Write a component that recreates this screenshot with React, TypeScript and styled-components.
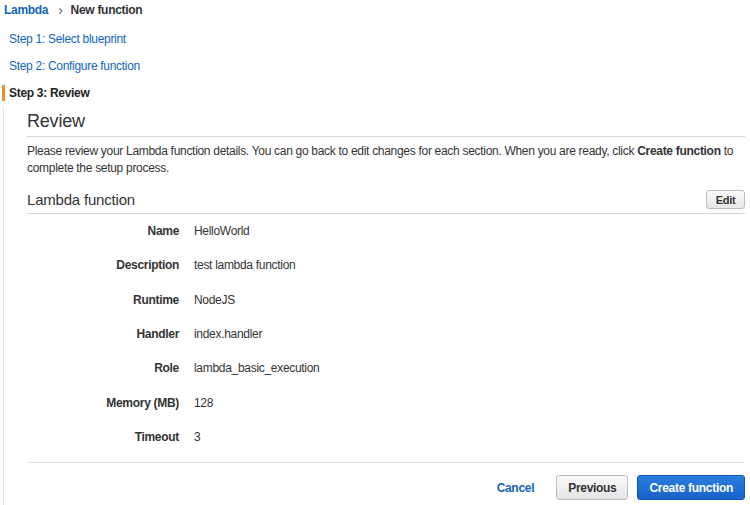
import React from "react";
import styled, { createGlobalStyle } from "styled-components";

const GlobalStyle = createGlobalStyle`
  html, body {
    margin: 0;
    padding: 0;
    background: #fff;
  }
  body {
    font-family: "Liberation Sans", Arial, sans-serif;
    font-size: 12px;
    letter-spacing: -0.3px;
    color: #333;
  }
  button {
    letter-spacing: -0.3px;
  }
`;

const Page = styled.div`
  width: 750px;
  height: 505px;
  overflow: hidden;
`;

const Breadcrumb = styled.div`
  display: flex;
  align-items: center;
  height: 18px;
  padding: 1px 4px 0;
  font-weight: bold;
`;

const Crumb = styled.a`
  color: #1166bb;
  text-decoration: none;
`;

const Sep = styled.span`
  color: #666;
  font-weight: normal;
  font-size: 14px;
  margin: 0 8px 0 10px;
  line-height: 14px;
`;

const Steps = styled.ul`
  list-style: none;
  margin: 0;
  padding: 12px 0 0 2px;
  display: flex;
  flex-direction: column;
  gap: 11px;
`;

const Step = styled.li<{ $active?: boolean }>`
  height: 16px;
  line-height: 16px;
  padding-left: 4px;
  border-left: 3px solid ${(p) => (p.$active ? "#ef8c2d" : "transparent")};
  color: ${(p) => (p.$active ? "#222" : "#1166bb")};
  font-weight: ${(p) => (p.$active ? "bold" : "normal")};
`;

const Panel = styled.div`
  margin: 6px 5px 0 3px;
  padding-left: 23px;
  border-left: 1px solid #e2e2e2;
  height: 400px;
`;

const Title = styled.h2`
  margin: 0;
  padding-top: 3px;
  font-size: 18px;
  font-weight: normal;
  letter-spacing: -0.2px;
  color: #333;
  line-height: 22px;
  padding-bottom: 4px;
  border-bottom: 1px solid #d5d5d5;
`;

const Intro = styled.p`
  margin: 6px 0 0;
  line-height: 17px;
  color: #333;
`;

const SectionHead = styled.div`
  display: flex;
  align-items: center;
  justify-content: space-between;
  margin-top: 13px;
  padding-bottom: 4px;
  border-bottom: 1px solid #d5d5d5;
`;

const SectionTitle = styled.h3`
  margin: 0;
  font-size: 15px;
  font-weight: normal;
  letter-spacing: -0.2px;
  color: #333;
  line-height: 18px;
`;

const SmallButton = styled.button`
  height: 19px;
  width: 39px;
  padding: 0;
  font-family: inherit;
  font-size: 11px;
  font-weight: bold;
  color: #333;
  background: linear-gradient(#fafafa, #e6e6e6);
  border: 1px solid #bdbdbd;
  border-radius: 3px;
`;

const Details = styled.dl`
  margin: 0;
  display: grid;
  grid-template-columns: 152px 1fr;
  grid-auto-rows: 34.3px;
  column-gap: 15px;
  align-items: center;
  padding-bottom: 8px;
  border-bottom: 1px solid #e0e0e0;
`;

const Label = styled.dt`
  text-align: right;
  font-weight: bold;
  color: #333;
`;

const Value = styled.dd`
  margin: 0;
  color: #333;
`;

const Footer = styled.div`
  display: flex;
  justify-content: flex-end;
  align-items: center;
  padding-top: 12px;
  gap: 9px;
`;

const LinkButton = styled.button`
  background: none;
  border: none;
  padding: 0;
  margin-right: 13px;
  font-family: inherit;
  font-size: 12px;
  font-weight: bold;
  color: #1166bb;
`;

const Button = styled.button<{ $primary?: boolean }>`
  height: 25px;
  padding: 0 ${(p) => (p.$primary ? 11 : 11)}px;
  font-family: inherit;
  font-size: 12px;
  font-weight: bold;
  border-radius: 3px;
  color: ${(p) => (p.$primary ? "#fff" : "#333")};
  background: ${(p) =>
    p.$primary
      ? "linear-gradient(#2a7ee0, #1562c9)"
      : "linear-gradient(#fafafa, #e4e4e4)"};
  border: 1px solid ${(p) => (p.$primary ? "#0f55b3" : "#bcbcbc")};
`;

const rows: [string, string][] = [
  ["Name", "HelloWorld"],
  ["Description", "test lambda function"],
  ["Runtime", "NodeJS"],
  ["Handler", "index.handler"],
  ["Role", "lambda_basic_execution"],
  ["Memory (MB)", "128"],
  ["Timeout", "3"],
];

export default function App() {
  return (
    <Page>
      <GlobalStyle />
      <Breadcrumb>
        <Crumb>Lambda</Crumb>
        <Sep>›</Sep>
        <span>New function</span>
      </Breadcrumb>
      <Steps>
        <Step>Step 1: Select blueprint</Step>
        <Step>Step 2: Configure function</Step>
        <Step $active>Step 3: Review</Step>
      </Steps>
      <Panel>
        <Title>Review</Title>
        <Intro>
          Please review your Lambda function details. You can go back to edit
          changes for each section. When you are ready, click{" "}
          <b>Create function</b> to complete the setup process.
        </Intro>
        <SectionHead>
          <SectionTitle>Lambda function</SectionTitle>
          <SmallButton>Edit</SmallButton>
        </SectionHead>
        <Details>
          {rows.map(([k, v]) => (
            <React.Fragment key={k}>
              <Label>{k}</Label>
              <Value>{v}</Value>
            </React.Fragment>
          ))}
        </Details>
        <Footer>
          <LinkButton>Cancel</LinkButton>
          <Button>Previous</Button>
          <Button $primary>Create function</Button>
        </Footer>
      </Panel>
    </Page>
  );
}
